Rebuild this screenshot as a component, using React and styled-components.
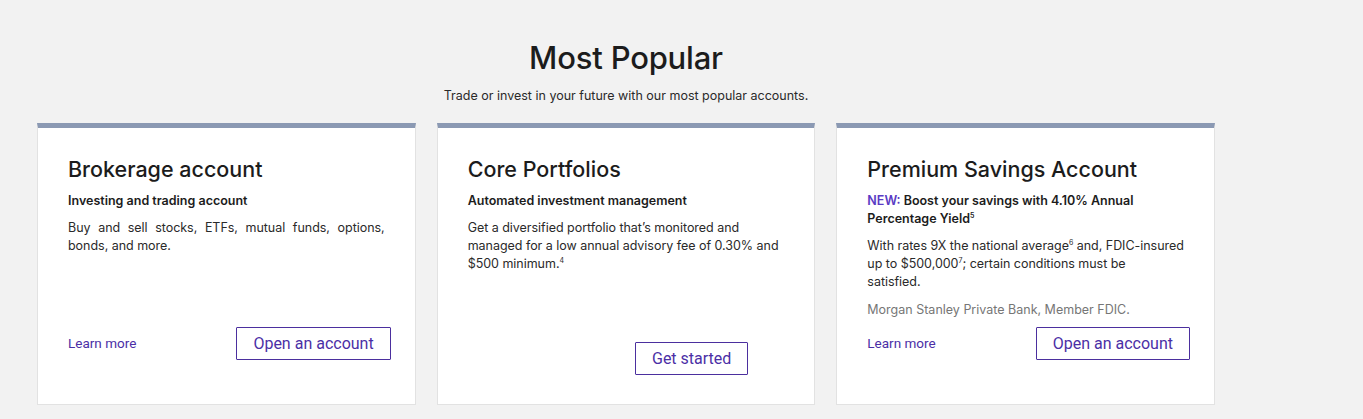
import React from 'react';
import styled, { createGlobalStyle } from 'styled-components';

const GlobalStyle = createGlobalStyle`
  body {
    margin: 0;
    background: #f2f2f2;
    font-family: Inter, "Open Sans", Arial, sans-serif;
    color: #1f1f1f;
  }
`;

const Section = styled.section`
  width: 1178px;
  margin-left: 37px;
  padding-top: 38px;
  padding-bottom: 14px;
`;

const Heading = styled.h1`
  margin: 0;
  text-align: center;
  font-size: 31px;
  line-height: 40px;
  font-weight: 500;
  letter-spacing: -0.2px;
  color: #1c1c1c;
`;

const Subheading = styled.p`
  margin: 9px 0 0;
  text-align: center;
  font-size: 12.5px;
  line-height: 18px;
  color: #2a2a2a;
`;

const Grid = styled.div`
  display: grid;
  grid-template-columns: repeat(3, 1fr);
  gap: 21px;
  margin-top: 18px;
`;

const Card = styled.article`
  display: flex;
  flex-direction: column;
  height: 282px;
  box-sizing: border-box;
  background: #fff;
  border: 1px solid #e2e2e2;
  border-top: 5px solid #8b99b3;
  padding: 27px 27px 0 30px;
`;

const CardTitle = styled.h2`
  margin: 0;
  font-size: 21.5px;
  line-height: 28px;
  font-weight: 500;
  color: #1c1c1c;
`;

const Tagline = styled.p`
  margin: 9px 0 0;
  font-size: 12.5px;
  line-height: 18px;
  font-weight: 600;
  color: #1c1c1c;
`;

const New = styled.span`
  color: #5a3bc4;
`;

const Body = styled.p`
  margin: 9px 0 0;
  font-size: 12.5px;
  line-height: 18px;
  letter-spacing: -0.03px;
  color: #2a2a2a;
  text-align: ${p => (p.$justify ? 'justify' : 'left')};
  margin-right: ${p => (p.$justify ? 3 : 0)}px;
`;

const Note = styled.p`
  margin: 10px 0 0;
  font-size: 12.5px;
  line-height: 18px;
  color: #767676;
`;

const Sup = styled.sup`
  font-size: 7px;
  line-height: 0;
`;

const Footer = styled.div`
  margin-top: auto;
  display: flex;
  align-items: center;
  justify-content: ${p => (p.$single ? 'flex-end' : 'space-between')};
  padding-bottom: ${p => p.$bottom}px;
  margin-right: ${p => p.$right}px;
`;

const LearnMore = styled.a`
  font-family: Roboto, Arial, sans-serif;
  font-size: 13.5px;
  line-height: 16px;
  margin-top: -2px;
  color: #4b2fa6;
  text-decoration: none;
`;

const Button = styled.button`
  height: 33px;
  padding: 0 16px;
  background: #fff;
  border: 1px solid #4b2f9e;
  border-radius: 1px;
  font-family: Roboto, Arial, sans-serif;
  font-size: 16px;
  color: #4b2fa6;
  cursor: pointer;
`;

const App = () => (
  <>
    <GlobalStyle />
    <Section>
      <Heading>Most Popular</Heading>
      <Subheading>Trade or invest in your future with our most popular accounts.</Subheading>
      <Grid>
        <Card>
          <CardTitle>Brokerage account</CardTitle>
          <Tagline>Investing and trading account</Tagline>
          <Body $justify>Buy and sell stocks, ETFs, mutual funds, options, bonds, and more.</Body>
          <Footer $bottom={44} $right={-3}>
            <LearnMore href="#">Learn more</LearnMore>
            <Button>Open an account</Button>
          </Footer>
        </Card>
        <Card>
          <CardTitle>Core Portfolios</CardTitle>
          <Tagline>Automated investment management</Tagline>
          <Body>
            Get a diversified portfolio that’s monitored and managed for a low annual advisory fee of 0.30% and
            $500 minimum.<Sup>4</Sup>
          </Body>
          <Footer $single $bottom={29} $right={39}>
            <Button>Get started</Button>
          </Footer>
        </Card>
        <Card>
          <CardTitle>Premium Savings Account</CardTitle>
          <Tagline>
            <New>NEW:</New> Boost your savings with 4.10% Annual Percentage Yield<Sup>5</Sup>
          </Tagline>
          <Body>
            With rates 9X the national average<Sup>6</Sup> and, FDIC-insured up to $500,000<Sup>7</Sup>; certain
            conditions must be
            <br />
            satisfied.
          </Body>
          <Note>Morgan Stanley Private Bank, Member FDIC.</Note>
          <Footer $bottom={44} $right={-3}>
            <LearnMore href="#">Learn more</LearnMore>
            <Button>Open an account</Button>
          </Footer>
        </Card>
      </Grid>
    </Section>
  </>
);

export default App;
